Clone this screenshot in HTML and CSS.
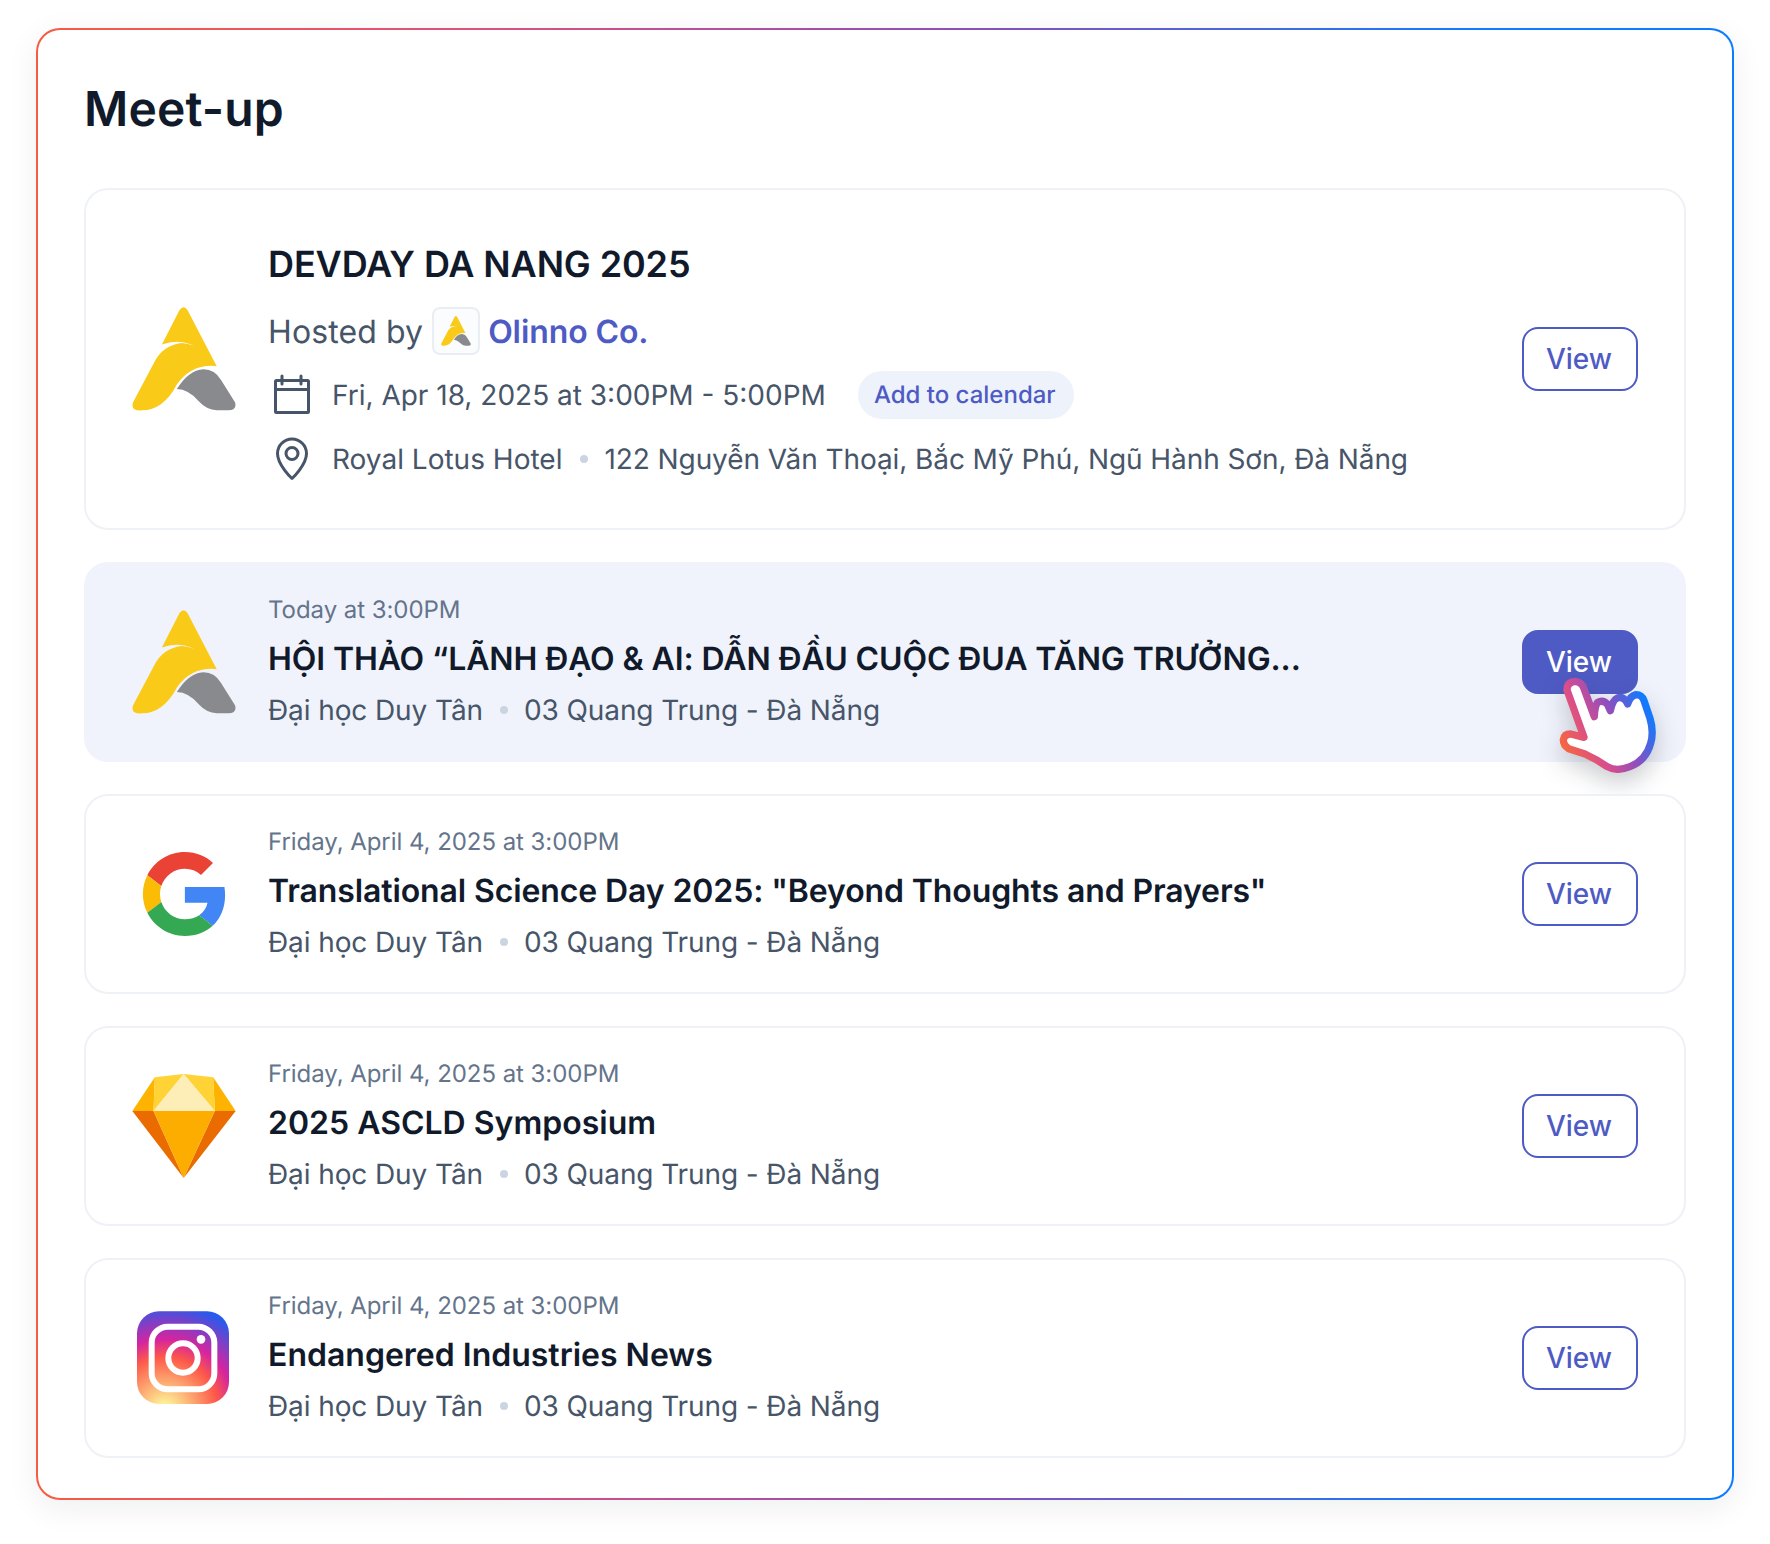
FILE: index.html
```html
<!DOCTYPE html>
<html lang="en">
<head>
<meta charset="utf-8">
<title>Meet-up</title>
<link rel="stylesheet" href="styles.css">
</head>
<body>
<svg class="defs" width="0" height="0" aria-hidden="true">
  <defs>
    <symbol id="olinno" viewBox="35 35 313 313">
      <path fill="#f9cb18" d="M178 44Q190 28 202 44L290 213Q215 205 170 268Q130 345 65 346Q28 348 39 320L100 205Q125 150 185 143Q205 144 222 152Q175 130 125 148Z"/>
      <path fill="#888a8d" d="M170 282Q205 225 250 222Q285 222 303 255L345 322Q352 346 325 346L290 346Q260 345 235 318Q205 283 170 282Z"/>
    </symbol>
  </defs>
</svg>
<main class="panel">
  <h1 class="panel-title">Meet-up</h1>
  <section class="card card-featured">
    <svg class="logo"><use href="#olinno"/></svg>
    <div class="featured-body">
      <h2 class="featured-title">DEVDAY DA NANG 2025</h2>
      <div class="host-row">
        <span class="host-label">Hosted by</span>
        <span class="host-logo"><svg class="host-logo-img"><use href="#olinno"/></svg></span>
        <a class="host-name">Olinno Co.</a>
      </div>
      <div class="info-row">
        <svg class="info-icon" viewBox="0 0 48 48" fill="none" stroke="#475569" stroke-width="3" stroke-linejoin="round" stroke-linecap="round">
          <rect x="7.5" y="9.500" width="33" height="32" rx="1"/>
          <path d="M7.500 18.500h33M14 5v8M33 5v8"/>
        </svg>
        <span>Fri, Apr 18, 2025 at 3:00PM - 5:00PM</span>
        <span class="pill">Add to calendar</span>
      </div>
      <div class="info-row info-row-place">
        <svg class="info-icon" viewBox="0 0 48 48" fill="none" stroke="#475569" stroke-width="3" stroke-linejoin="round">
          <path d="M24 43.500C24 43.500 9.500 30 9.500 18.500A14.500 14.500 0 1 1 38.500 18.500C38.500 30 24 43.500 24 43.500Z"/>
          <circle cx="24" cy="18.500" r="6"/>
        </svg>
        <span>Royal Lotus Hotel</span>
        <i class="dot"></i>
        <span class="address">122 Nguyễn Văn Thoại, Bắc Mỹ Phú, Ngũ Hành Sơn, Đà Nẵng</span>
      </div>
    </div>
    <button class="btn">View</button>
  </section>

  <section class="card card-row card-active">
    <svg class="logo"><use href="#olinno"/></svg>
    <div class="row-body">
      <div class="row-date">Today at 3:00PM</div>
      <h3 class="row-title row-title-tight">HỘI THẢO “LÃNH ĐẠO &amp; AI: DẪN ĐẦU CUỘC ĐUA TĂNG TRƯỞNG...</h3>
      <div class="row-place"><span>Đại học Duy Tân</span><i class="dot"></i><span>03 Quang Trung - Đà Nẵng</span></div>
    </div>
    <button class="btn btn-solid">View</button>
    <svg class="pointer" viewBox="0 0 600 600" fill="none">
      <defs>
        <linearGradient id="hand" gradientUnits="userSpaceOnUse" x1="190" y1="430" x2="450" y2="300">
          <stop offset="0" stop-color="#f8683a"/>
          <stop offset=".35" stop-color="#d84d8e"/>
          <stop offset=".65" stop-color="#8a4fc0"/>
          <stop offset="1" stop-color="#0f7bff"/>
        </linearGradient>
      </defs>
      <path fill="#fff" stroke="url(#hand)" stroke-width="22" stroke-linejoin="round" stroke-linecap="round" d="M201 240Q201 216 226 214Q246 216 252 236L283 320Q284 290 292 278Q308 268 322 282L331 302Q338 270 352 264Q372 258 383 282Q390 258 408 254Q426 254 432 272L450 325Q462 365 452 400Q438 452 390 470Q350 486 322 470Q290 448 255 432L206 416Q190 406 190 390Q192 372 212 372L252 382Z"/>
    </svg>
  </section>

  <section class="card card-row">
    <svg class="logo logo-pad" viewBox="-0.5 0 48 48">
      <path fill="#EA4335" d="M24 9.500c3.540 0 6.710 1.220 9.210 3.600l6.850-6.850C35.900 2.380 30.470 0 24 0 14.620 0 6.510 5.380 2.560 13.220l7.980 6.190C12.430 13.720 17.740 9.500 24 9.500z"/>
      <path fill="#4285F4" d="M46.980 24.550c0-1.570-.15-3.090-.38-4.550H24v9.020h12.940c-.58 2.960-2.260 5.480-4.780 7.180l7.730 6c4.510-4.180 7.090-10.360 7.090-17.650z"/>
      <path fill="#FBBC05" d="M10.530 28.590c-.48-1.450-.76-2.990-.76-4.590s.27-3.140.76-4.590l-7.980-6.190C.92 16.460 0 20.120 0 24c0 3.880.92 7.540 2.560 10.780l7.970-6.190z"/>
      <path fill="#34A853" d="M24 48c6.480 0 11.930-2.130 15.890-5.810l-7.730-6c-2.150 1.450-4.920 2.300-8.160 2.300-6.260 0-11.570-4.220-13.470-9.910l-7.980 6.190C6.510 42.620 14.620 48 24 48z"/>
    </svg>
    <div class="row-body">
      <div class="row-date">Friday, April 4, 2025 at 3:00PM</div>
      <h3 class="row-title row-title-tight">Translational Science Day 2025: "Beyond Thoughts and Prayers"</h3>
      <div class="row-place"><span>Đại học Duy Tân</span><i class="dot"></i><span>03 Quang Trung - Đà Nẵng</span></div>
    </div>
    <button class="btn">View</button>
  </section>

  <section class="card card-row">
    <svg class="logo" viewBox="37 42 308 310">
      <polygon fill="#fdb300" points="104,52 37,152 100,152"/>
      <polygon fill="#fdb300" points="278,52 345,152 283,152"/>
      <polygon fill="#ffd235" points="104,52 190,42 100,152"/>
      <polygon fill="#ffd235" points="278,52 190,42 283,152"/>
      <polygon fill="#fdeeb8" points="190,42 100,152 283,152"/>
      <polygon fill="#ea6c00" points="37,152 100,152 190,352"/>
      <polygon fill="#ea6c00" points="345,152 283,152 190,352"/>
      <polygon fill="#fdad00" points="100,152 283,152 190,352"/>
    </svg>
    <div class="row-body">
      <div class="row-date">Friday, April 4, 2025 at 3:00PM</div>
      <h3 class="row-title">2025 ASCLD Symposium</h3>
      <div class="row-place"><span>Đại học Duy Tân</span><i class="dot"></i><span>03 Quang Trung - Đà Nẵng</span></div>
    </div>
    <button class="btn">View</button>
  </section>

  <section class="card card-row">
    <svg class="logo" viewBox="35 32 312 312">
      <defs>
        <radialGradient id="insta" cx=".3" cy="1.07" r="1.28">
          <stop offset="0" stop-color="#fdf497"/>
          <stop offset=".05" stop-color="#fdf497"/>
          <stop offset=".45" stop-color="#fd5949"/>
          <stop offset=".6" stop-color="#d6249f"/>
          <stop offset=".9" stop-color="#285aeb"/>
        </radialGradient>
      </defs>
      <rect x="50" y="48" width="276" height="278" rx="66" fill="url(#insta)"/>
      <rect x="94" y="94" width="188" height="188" rx="48" fill="none" stroke="#fff" stroke-width="18"/>
      <circle cx="188" cy="188" r="44" fill="none" stroke="#fff" stroke-width="18"/>
      <circle cx="242" cy="132" r="13" fill="#fff"/>
    </svg>
    <div class="row-body">
      <div class="row-date">Friday, April 4, 2025 at 3:00PM</div>
      <h3 class="row-title">Endangered Industries News</h3>
      <div class="row-place"><span>Đại học Duy Tân</span><i class="dot"></i><span>03 Quang Trung - Đà Nẵng</span></div>
    </div>
    <button class="btn">View</button>
  </section>
</main>
</body>
</html>
```
FILE: styles.css
```css
* { box-sizing: border-box; }
html, body { margin: 0; background: #fff; }
body {
  padding: 28px 36px 44px;
  font-family: Inter, "Noto Sans", sans-serif;
  color: #111a2b;
  text-rendering: geometricPrecision;
}
.defs { position: absolute; }
.panel {
  width: 1698px;
  height: 1472px;
  padding: 45px 46px 40px;
  border: 2px solid transparent;
  border-radius: 24px;
  background:
    linear-gradient(#fff, #fff) padding-box,
    linear-gradient(90deg, #f55c42 0%, #e0507a 25%, #8a4fb8 55%, #0f7bff 85%, #0b7bff 100%) border-box;
  box-shadow: 0 8px 32px rgba(16, 24, 40, .07);
}
.panel-title {
  margin: 0 0 45px;
  font-size: 48px;
  line-height: 68px;
  font-weight: 600;
  letter-spacing: .15px;
  color: #111a2b;
}
.card {
  position: relative;
  display: flex;
  align-items: center;
  gap: 32px;
  border: 2px solid #eef1f6;
  border-radius: 24px;
  background: #fff;
  padding: 0 46px;
  margin-bottom: 32px;
}
.card:last-child { margin-bottom: 0; }
.card-featured { height: 342px; }
.card-row { height: 200px; }
.card-active { background: #f0f3fb; border-color: #f0f3fb; }
.logo { width: 104px; height: 104px; flex: none; }
.logo-pad { padding: 10px; }
.featured-body, .row-body { flex: 1; min-width: 0; }
.featured-body { padding-top: 2px; }
.featured-title {
  margin: 0 0 17px;
  font-size: 36px;
  line-height: 52px;
  font-weight: 600;
  letter-spacing: -.12px;
}
.host-row {
  display: flex;
  align-items: center;
  height: 48px;
  font-size: 32px;
  color: #475569;
  margin-bottom: 16px;
}
.host-label, .host-name { padding-top: 2px; }
.host-label { letter-spacing: .1px; }
.host-logo {
  display: flex;
  align-items: center;
  justify-content: center;
  width: 48px;
  height: 48px;
  margin: 0 8px 0 9px;
  border: 2px solid #e9edf4;
  border-radius: 8px;
  background: #fbfcfe;
}
.host-logo-img { width: 30px; height: 30px; }
.host-name { color: #4f5bc4; font-weight: 600; letter-spacing: -.1px; }
.info-row {
  display: flex;
  align-items: center;
  height: 48px;
  font-size: 28px;
  color: #475569;
}
.info-row-place { margin-top: 16px; }
.info-row-place .dot { margin-left: 18px; }
.address { letter-spacing: -.08px; }
.info-icon { width: 48px; height: 48px; margin-right: 16px; flex: none; }
.pill {
  margin-left: 32px;
  height: 48px;
  padding: 0 18px 0 16px;
  border-radius: 24px;
  background: #eef2fb;
  color: #4f5bc4;
  font-size: 24px;
  font-weight: 500;
  line-height: 48px;
}
.dot {
  flex: none;
  width: 8px;
  height: 8px;
  margin: 0 16px 0 17px;
  border-radius: 50%;
  background: #cbd5e1;
}
.row-date { font-size: 24px; line-height: 32px; color: #64748b; letter-spacing: -.05px; }
.row-title { margin: 13px 0 11px; font-size: 32px; line-height: 40px; font-weight: 600; }
.row-title-tight { letter-spacing: -.11px; }
.row-place { display: flex; align-items: center; font-size: 28px; line-height: 40px; color: #475569; letter-spacing: -.1px; }
.btn {
  flex: none;
  width: 116px;
  height: 64px;
  border: 2px solid #4f5bc4;
  border-radius: 16px;
  background: #fff;
  color: #4f5bc4;
  font: 500 28px Inter, sans-serif;
  padding: 0 2px 0 0;
}
.btn-solid { background: #4f5bc4; color: #fff; }
.pointer {
  position: absolute;
  right: -16px;
  top: 46px;
  width: 200px;
  height: 200px;
  filter: drop-shadow(0 10px 12px rgba(16, 24, 40, .22));
}
```
